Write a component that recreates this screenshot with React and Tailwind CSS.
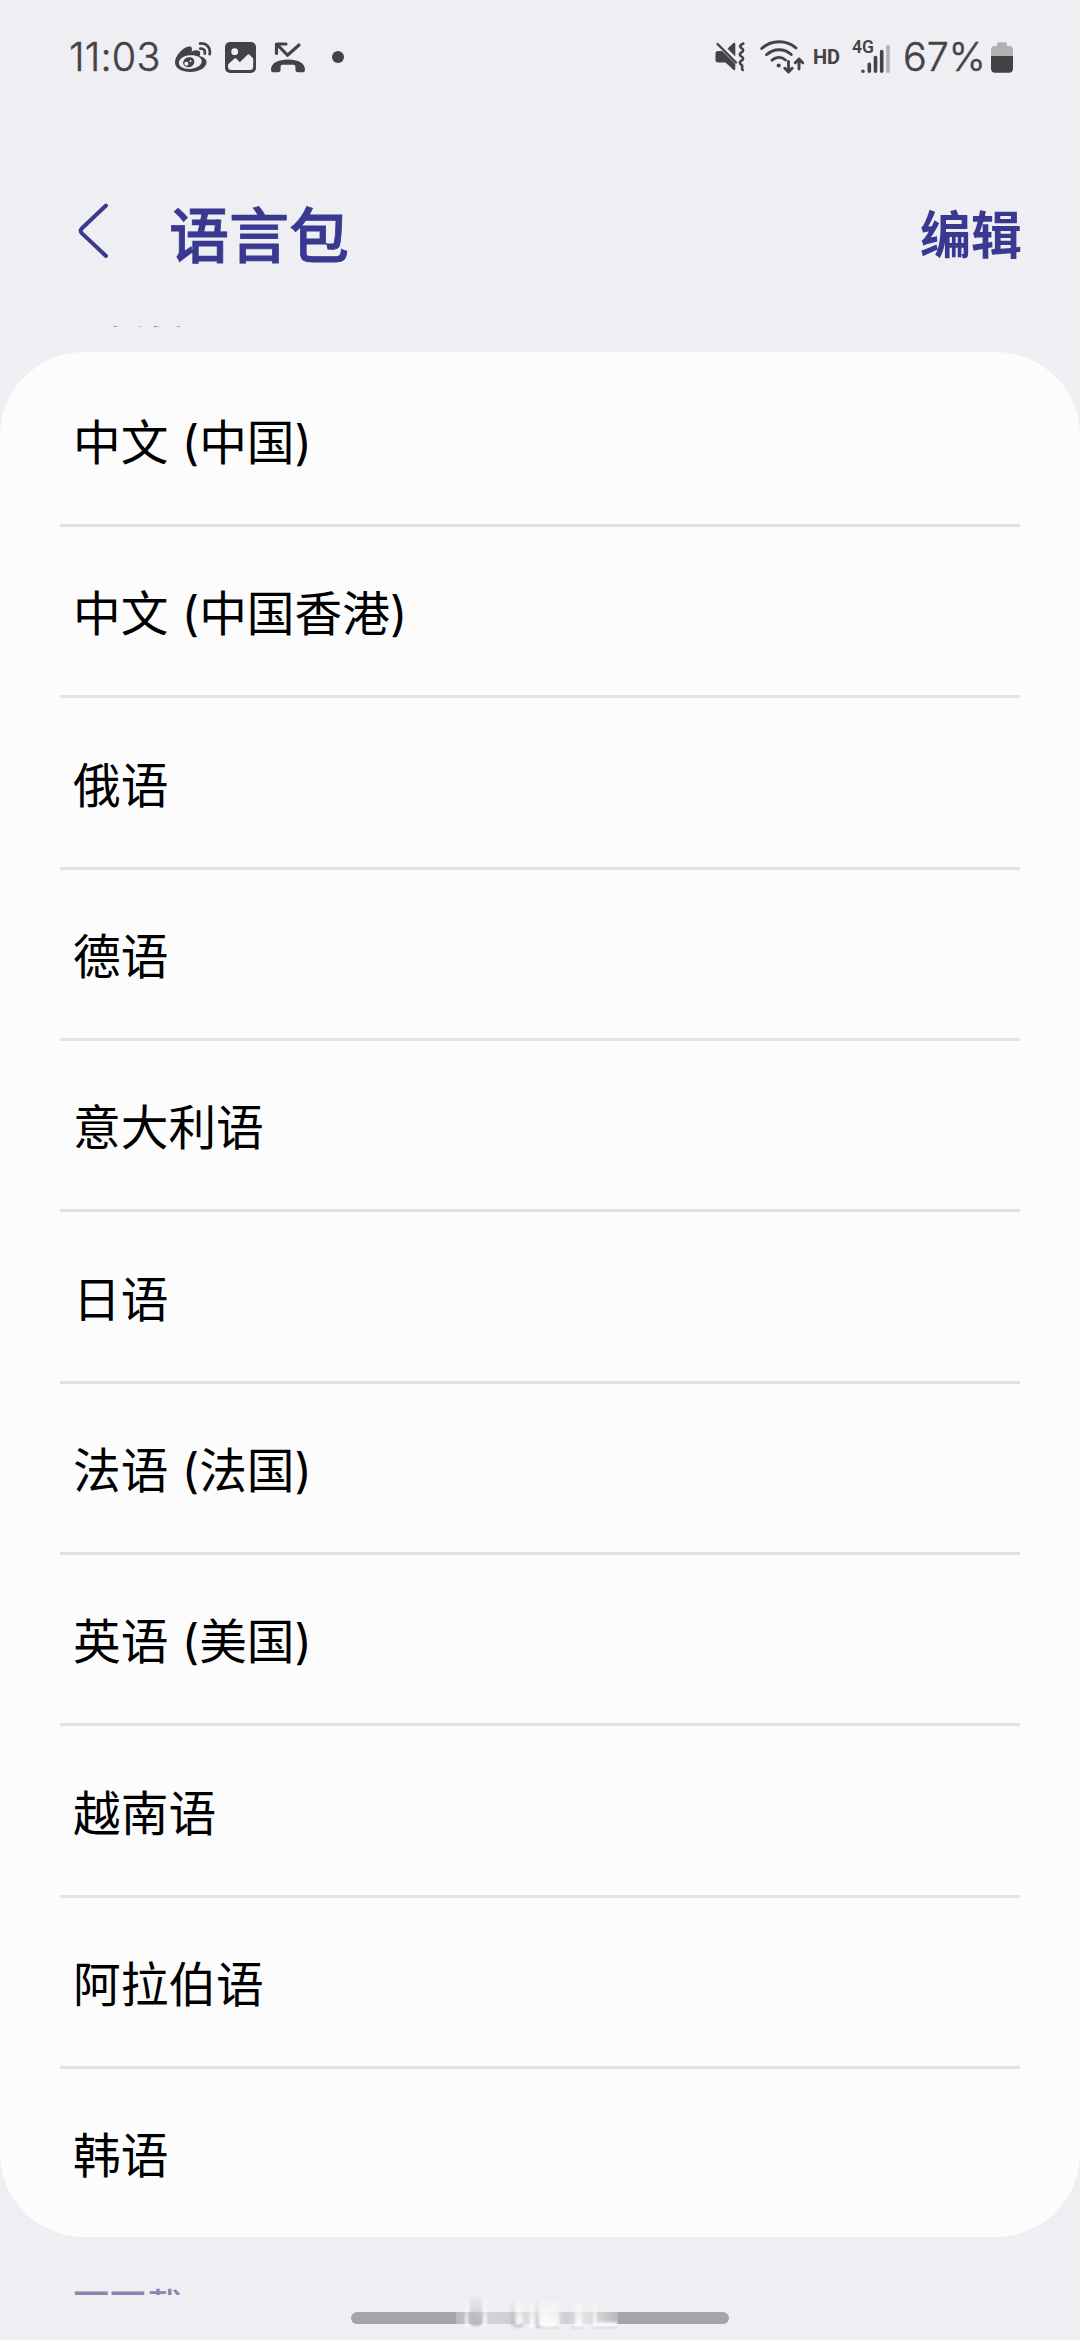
import React from "react";

const languages = [
  "中文 (中国)",
  "中文 (中国香港)",
  "俄语",
  "德语",
  "意大利语",
  "日语",
  "法语 (法国)",
  "英语 (美国)",
  "越南语",
  "阿拉伯语",
  "韩语",
];

function WeiboIcon() {
  return (
    <svg className="ml-[16px] h-[30px] w-[37px]" viewBox="0 0 37 30" fill="none">
      <path fill="#434346" fillRule="evenodd" d="M0 20.5C0 14 8 5 14 4.6c3-.1 3.6 2 2.6 4.8 3.6-1.4 8.4-2 8.6 1.6.1 1-.2 2-.5 3 2.7 1 6.8 2 6.8 6.3 0 5.5-7.5 9.7-16.3 9.7C7 30 0 26.500 0 20.500ZM15 13.200C8.500 13.500 3.800 17 3.900 21c.1 4 5.200 6.300 11.600 5.900 6.500-.4 11.300-3.900 11.200-7.900-.1-4-5.200-6.200-11.700-5.800Z" />
      <path fill="#434346" fillRule="evenodd" d="M13.500 15.300c3.700-.5 6 1.600 5.800 4.600-.3 3.200-3 5.400-6.200 5.400-3 0-5.200-2-5-4.700.2-2.700 2.500-4.900 5.400-5.300Zm-1.700 4.500a2 2 0 1 0 .1 3.900 2 2 0 0 0-.1-3.900Zm3.700-1.700a1 1 0 1 0 0 2 1 1 0 0 0 0-2Z" />
      <path d="M25 1.600c6-1.200 11.200 4 9.600 10.600M25.200 6.600c3.300-.5 5.300 1.800 4.500 5" stroke="#434346" strokeWidth="2.700" strokeLinecap="round" />
    </svg>
  );
}

function PhotoIcon() {
  return (
    <svg className="ml-[13px] h-[31px] w-[31px]" viewBox="0 0 31 31" fill="none">
      <rect width="31" height="31" rx="5" fill="#434346" />
      <circle cx="9.700" cy="9.700" r="3.400" fill="#efeef3" />
      <path d="M3 22.500 9.500 16.500q1-.8 2 .2l3.300 3.600L22.500 12.800q1-.9 2 0L28.200 16.500v8a3.500 3.500 0 0 1-3.500 3.500H6.500A3.500 3.500 0 0 1 3 24.500Z" fill="#efeef3" />
    </svg>
  );
}

function MissedCallIcon() {
  return (
    <svg className="ml-[15px] h-[31px] w-[34px]" viewBox="0 0 34 31" fill="none">
      <path d="M5.500 11.500V2h9.500M6 2.500l10.500 10.700L28 3" stroke="#434346" strokeWidth="3.200" strokeLinecap="round" strokeLinejoin="round" />
      <path d="M0 27.500C0 21 7 17.500 17 17.500s17 3.500 17 10c0 2-.8 2.800-2.500 2.800h-4.600c-1.700 0-2.500-.9-2.500-2.500v-3c0-1.300-.7-2-2-2H11.600c-1.300 0-2 .7-2 2v3c0 1.600-.8 2.500-2.500 2.500H2.500C.8 30.300 0 29.500 0 27.500Z" fill="#434346" />
    </svg>
  );
}

function MuteVibrateIcon() {
  return (
    <svg className="h-[30px] w-[30px]" viewBox="0 0 30 30" fill="none">
      <path d="M12.500 6.500 18.300 1.200c1-.9 2-.4 2 .9v12.400ZM.5 11.500C.5 9.900 1.400 9 3 9h4.200L20.300 22v4.800c0 1.500-1 1.900-2 1L10.500 20.500H3c-1.600 0-2.500-.9-2.500-2.500Z" fill="#434346" />
      <path d="m2.500 2 18.500 18.500" stroke="#434346" strokeWidth="2.400" strokeLinecap="round" />
      <path d="M28.300 1.500c-4 2-4 3.200-1.800 4.600s2.200 2.800 0 4.200-2.200 2.800 0 4.200 2.200 2.800 0 4.200-2.200 2.800 0 4.200-1 3.600 1.300 5.100" stroke="#434346" strokeWidth="2.600" strokeLinecap="round" strokeLinejoin="round" />
    </svg>
  );
}

function WifiIcon() {
  return (
    <svg className="ml-[15px] h-[34px] w-[44px]" viewBox="0 0 44 34" fill="none">
      <g stroke="#434346" strokeWidth="2.900" strokeLinecap="round" strokeLinejoin="round">
        <path d="M1.700 8.500C11-.3 26.500-.7 36 8" />
        <path d="M6.500 14.800c7.200-6.700 17.500-6.700 24.800-.3M12 20.200c4.200-3.600 9.600-3.600 13.500-.2" />
        <path d="M28.500 21.500v10.500m-3.700-3.700 3.700 3.700 3.700-3.700M39 29V19m-3.700 3.700L39 19l3.700 3.700" />
      </g>
      <circle cx="18.700" cy="25.500" r="2.100" fill="#434346" />
    </svg>
  );
}

function SignalIcon() {
  return (
    <div className="ml-[13px] grid h-[34px] w-[39px]">
      <span className="col-start-1 row-start-1 -mt-[3px] font-['Roboto'] text-[17.500px] leading-[20px] font-semibold">4G</span>
      <svg className="col-start-1 row-start-1 h-[34px] w-[39px]" viewBox="0 0 39 34" fill="none">
        <g strokeWidth="3.600" strokeLinecap="round" stroke="#434346">
          <path d="M11 31.200v.1M17.300 31.200v-7M23.500 31.200V17.500M29.700 31.200v-19.700" />
          <path d="M36 31.200V6.500" stroke="#b1b0b3" />
        </g>
      </svg>
    </div>
  );
}

function BatteryIcon() {
  return (
    <svg className="ml-[8px] h-[31px] w-[22px]" viewBox="0 0 22 31" fill="none">
      <path d="M6 4V2.500C6 1 6.700.3 8 .3h6c1.300 0 2 .7 2 2.200V4h2.500C20.700 4 22 5.300 22 7.500V14H0V7.500C0 5.300 1.300 4 3.500 4Z" fill="#b1b0b3" />
      <path d="M0 14h22v12.500c0 2.700-1.300 4.200-4 4.200H4c-2.700 0-4-1.500-4-4.200Z" fill="#434346" />
    </svg>
  );
}

function StatusBar() {
  return (
    <div className="flex h-[114px] items-center justify-between pr-[67px] pl-[69px] text-[#434346]">
      <div className="flex items-center">
        <div className="w-[90px] text-[39.500px] leading-[48px] font-light tracking-[0.2px] whitespace-nowrap [-webkit-text-stroke:0.5px_#434346]">11:03</div>
        <WeiboIcon />
        <PhotoIcon />
        <MissedCallIcon />
        <span className="ml-[27px] size-[12px] rounded-full bg-[#434346]" />
      </div>
      <div className="flex items-center">
        <MuteVibrateIcon />
        <WifiIcon />
        <span className="ml-[9px] w-[26px] font-['Roboto'] text-[20px] font-bold whitespace-nowrap">HD</span>
        <SignalIcon />
        <span className="ml-[12px] w-[80px] text-[39.500px] leading-[48px] font-light whitespace-nowrap [-webkit-text-stroke:0.5px_#434346]">67%</span>
        <BatteryIcon />
      </div>
    </div>
  );
}

function Header() {
  return (
    <header className="flex h-[212px] items-start pt-[79px] pr-[58px] pl-[78px] text-[#393991]">
      <svg className="mt-[10px] h-[56px] w-[30px]" viewBox="0 0 30 56" fill="none">
        <path d="M28 2.500 4 25.200q-2.600 2.600 0 5.200L28 53" stroke="#393991" strokeWidth="4" strokeLinecap="round" strokeLinejoin="round" />
      </svg>
      <h1 className="ml-[61px] text-[60px] leading-[86px] font-medium [-webkit-text-stroke:0.8px_#393991]">语言包</h1>
      <button className="ml-auto text-[51px] leading-[86px] font-bold">编辑</button>
    </header>
  );
}

function LanguageRow({ name }) {
  return (
    <li className="group flex h-[171.33px] flex-col px-[60px] first:h-[172px]">
      <div className="h-[3px] bg-[#e3e3e4] group-first:bg-transparent" />
      <div className="flex flex-1 items-center pt-[8px] pl-[13px] text-[47.700px] text-black">{name}</div>
    </li>
  );
}

function HomeIndicator() {
  return (
    <div className="relative mx-auto mt-[17px] h-[12px] w-[378px] rounded-full bg-[#a5a5a8]">
      <svg className="absolute -top-[22px] left-[105px] h-[44px] w-[166px]" viewBox="0 0 166 44" fill="none">
        <defs>
          <linearGradient id="haze" x1="0" x2="1" y1="0" y2="0">
            <stop offset="0" stopColor="#b9b9bc" />
            <stop offset=".2" stopColor="#d3d3d6" />
            <stop offset=".36" stopColor="#d0d0d3" />
            <stop offset=".55" stopColor="#eeeeef" />
            <stop offset=".68" stopColor="#d0d0d3" />
            <stop offset=".8" stopColor="#e3e3e5" />
            <stop offset="1" stopColor="#b9b9bc" />
          </linearGradient>
          <linearGradient id="fade" x1="0" x2="0" y1="0" y2="1">
            <stop offset="0" stopColor="#fff" stopOpacity="0" />
            <stop offset="1" stopColor="#fff" stopOpacity=".9" />
          </linearGradient>
          <linearGradient id="shade" x1="0" x2="0" y1="0" y2="1">
            <stop offset="0" stopColor="#b4b4b7" stopOpacity="0" />
            <stop offset="1" stopColor="#b4b4b7" stopOpacity=".8" />
          </linearGradient>
          <filter id="soft" x="-10%" y="-10%" width="120%" height="120%">
            <feGaussianBlur stdDeviation="1" />
          </filter>
        </defs>
        <path d="M0 22h162v12H0Z" fill="url(#haze)" />
        <g filter="url(#soft)">
          <path d="M14 5h12v30q-6 3-12 0Z" fill="url(#shade)" />
          <path d="M9 5h3v30q8 4 15 0V5h4v31q-11 4-22 0Z" fill="url(#fade)" />
          <path d="M60 8h7v27h-7ZM74 6h4v31h-4ZM84 6h19v31H84ZM119 6h7v31h-7ZM137 6h4v31h-4ZM142 32h19v4h-19Z" fill="url(#fade)" />
          <path d="M55 9h3v24q4 3 9 0v4q-7 2-12-2ZM80 9h2v26q8 4 20 1v2H80ZM115 37h12v1h-12ZM136 37h26v1h-26Z" fill="url(#shade)" />
        </g>
      </svg>
    </div>
  );
}

export default function App() {
  return (
    <main className="flex h-[2340px] w-[1080px] flex-col overflow-hidden bg-[#efeef3] font-['Inter','Noto_Sans_CJK_SC',sans-serif]">
      <StatusBar />
      <Header />
      <div className="h-[26px] pl-[73px] font-['Noto_Sans_CJK_SC',sans-serif] text-[36.500px] leading-[36px] font-medium text-[#8988ad]">
        <div className="h-[2px] overflow-hidden">
          <div className="-mt-[35px]">已安装</div>
        </div>
      </div>
      <ul className="h-[1885px] shrink-0 overflow-hidden rounded-[84px] bg-[#fcfcfd] font-['Inter','Noto_Sans_CJK_SC',sans-serif]">
        {languages.map((name) => (
          <LanguageRow key={name} name={name} />
        ))}
      </ul>
      <div className="mt-[50px] h-[8px] overflow-hidden pl-[73px] font-['Noto_Sans_CJK_SC',sans-serif] text-[36.500px] leading-[36px] font-medium text-[#8988ad]">可下载</div>
      <HomeIndicator />
    </main>
  );
}
